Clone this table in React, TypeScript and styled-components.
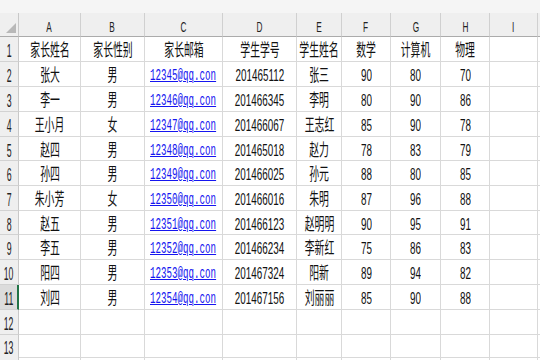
import styled, { createGlobalStyle } from "styled-components";

const Global = createGlobalStyle`
	body {
		margin: 0;
		background: #ffffff;
	}
`;

const COLS = "19px 62px 64px 78px 74px 45px 49px 50px 49px 48px 40px";

const Sheet = styled.div`
	width: 540px;
	height: 360px;
	overflow: hidden;
	background: #ffffff;
	font-family: "Liberation Sans", "Noto Sans CJK SC", sans-serif;
	color: #111111;
`;

const TopStrip = styled.div`
	height: 13px;
	background: #f5f5f5;
`;

const Line = styled.div<{ $h: number }>`
	display: grid;
	grid-template-columns: ${COLS};
	height: ${(p) => p.$h}px;
`;

const Corner = styled.div`
	position: relative;
	background: #efefef;
	border-right: 1px solid #c8c8c8;
	border-bottom: 1px solid #ababab;
	box-sizing: border-box;
	&::after {
		content: "";
		position: absolute;
		right: 2px;
		bottom: 3px;
		border-left: 10px solid transparent;
		border-bottom: 10px solid #b8b8b8;
	}
`;

const ColHead = styled.div`
	background: #efefef;
	border-right: 1px solid #d0d0d0;
	border-bottom: 1px solid #ababab;
	box-sizing: border-box;
	display: flex;
	align-items: center;
	justify-content: center;
	overflow: visible;
	padding-top: 3px;
	color: #222222;
`;

const RowHead = styled.div<{ $active?: boolean }>`
	background: ${(p) => (p.$active ? "#dcdcdc" : "#efefef")};
	border-right: ${(p) => (p.$active ? "2px solid #217346" : "1px solid #c8c8c8")};
	border-bottom: 1px solid #d2d2d2;
	box-sizing: border-box;
	display: flex;
	align-items: center;
	justify-content: center;
	padding-top: 3px;
	overflow: visible;
	color: #222222;
`;

const Cell = styled.div<{ $left?: boolean }>`
	border-right: 1px solid #d9d9d9;
	border-bottom: 1px solid #d9d9d9;
	box-sizing: border-box;
	display: flex;
	align-items: center;
	justify-content: ${(p) => (p.$left ? "flex-start" : "center")};
	padding-left: ${(p) => (p.$left ? "5px" : "0")};
	padding-top: 3px;
	overflow: visible;
	white-space: nowrap;
	min-width: 0;
`;

// narrow tall glyphs as in the stretched screenshot
const Txt = styled.span<{ $size?: number; $sx?: number; $link?: boolean }>`
	display: inline-block;
	flex-shrink: 0;
	font-size: ${(p) => p.$size ?? 17}px;
	line-height: 1;
	transform: scaleX(${(p) => p.$sx ?? 0.58});
	transform-origin: ${(p) => (p.$link ? "left" : "center")} center;
	font-family: ${(p) =>
		p.$link
			? '"Liberation Mono", monospace'
			: '"Liberation Sans", "Noto Sans CJK SC", sans-serif'};
	color: ${(p) => (p.$link ? "#1515f0" : "inherit")};
	text-decoration: ${(p) => (p.$link ? "underline" : "none")};
	text-underline-offset: 1px;
`;

const letters = ["A", "B", "C", "D", "E", "F", "G", "H", "I", ""];

const rows: string[][] = [
	["家长姓名", "家长性别", "家长邮箱", "学生学号", "学生姓名", "数学", "计算机", "物理"],
	["张大", "男", "12345@qq.con", "201465112", "张三", "90", "80", "70"],
	["李一", "男", "12346@qq.con", "201466345", "李明", "80", "90", "86"],
	["王小月", "女", "12347@qq.con", "201466067", "王志红", "85", "90", "78"],
	["赵四", "男", "12348@qq.con", "201465018", "赵力", "78", "83", "79"],
	["孙四", "男", "12349@qq.con", "201466025", "孙元", "88", "80", "85"],
	["朱小芳", "女", "12350@qq.con", "201466016", "朱明", "87", "96", "88"],
	["赵五", "男", "12351@qq.con", "201466123", "赵明明", "90", "95", "91"],
	["李五", "男", "12352@qq.con", "201466234", "李新红", "75", "86", "83"],
	["阳四", "男", "12353@qq.con", "201467324", "阳新", "89", "94", "82"],
	["刘四", "男", "12354@qq.con", "201467156", "刘丽丽", "85", "90", "88"],
	[],
	[],
];

const heights = [25, 25, 25, 25, 24, 25, 25, 24, 25, 25, 25, 25, 22];

export default function App() {
	return (
		<Sheet>
			<Global />
			<TopStrip />
			<Line $h={24}>
				<Corner />
				{letters.map((l, i) => (
					<ColHead key={i}>
						<Txt $size={15} $sx={0.55}>
							{l}
						</Txt>
					</ColHead>
				))}
			</Line>
			{rows.map((r, i) => (
				<Line key={i} $h={heights[i]}>
					<RowHead $active={i === 10}>
						<Txt $size={19} $sx={0.46}>
							{i + 1}
						</Txt>
					</RowHead>
					{letters.map((_, c) => {
						const v = r[c] ?? "";
						const link = i > 0 && c === 2 && v !== "";
						return (
							<Cell key={c} $left={c === 2 && i > 0}>
								{v !== "" && (
									<Txt $link={link} $sx={link ? 0.54 : 0.58}>
										{v}
									</Txt>
								)}
							</Cell>
						);
					})}
				</Line>
			))}
			<Line $h={10}>
				<RowHead />
				{letters.map((_, c) => (
					<Cell key={c} />
				))}
			</Line>
		</Sheet>
	);
}
